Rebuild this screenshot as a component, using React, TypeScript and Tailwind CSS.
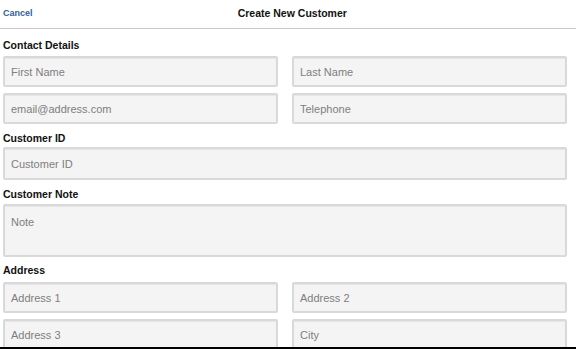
const inputCls =
  'block w-full h-[31px] rounded-[2px] border-2 border-[#d9d9d9] bg-[#f4f4f4] pl-[6px] text-[11px] text-[#333] placeholder:text-[#7e7e7e] shadow-[inset_0_1px_1px_rgba(0,0,0,0.06)] outline-none';

function Field({ placeholder }: { placeholder: string }) {
  return <input className={inputCls} placeholder={placeholder} />;
}

function Section({
  title,
  top,
  gap,
  children,
}: {
  title: string;
  top: string;
  gap: string;
  children: React.ReactNode;
}) {
  return (
    <section className={top}>
      <h2 className={`text-[10.5px] leading-[14px] font-bold text-[#111] ${gap}`}>{title}</h2>
      {children}
    </section>
  );
}

export default function App() {
  return (
    <div
      className="flex h-[349px] w-[576px] flex-col overflow-hidden border-b-2 border-black bg-white"
      style={{ fontFamily: '"Liberation Sans", Arial, sans-serif' }}
    >
      <header className="relative flex h-[29px] shrink-0 items-center border-b border-[#c9c9c9] pl-[3px]">
        <button className="text-[9px] font-bold text-[#2d5ea8]">Cancel</button>
        <h1 className="flex-1 pr-[24px] text-center text-[10.5px] font-bold text-[#111]">
          Create New Customer
        </h1>
      </header>

      <div className="pl-[3px] pr-[9px]">
        <Section title="Contact Details" top="mt-[9px]" gap="mb-[4px]">
          <div className="grid grid-cols-2 gap-x-[14px] gap-y-[6px]">
            <Field placeholder="First Name" />
            <Field placeholder="Last Name" />
            <Field placeholder="email@address.com" />
            <Field placeholder="Telephone" />
          </div>
        </Section>

        <Section title="Customer ID" top="mt-[7px]" gap="mb-[2px]">
          <input className={`${inputCls} h-[33px]`} placeholder="Customer ID" />
        </Section>

        <Section title="Customer Note" top="mt-[7px]" gap="mb-[3px]">
          <textarea
            className={`${inputCls} h-[53px] resize-none pt-[9px] leading-[14px]`}
            placeholder="Note"
          />
        </Section>

        <Section title="Address" top="mt-[6px]" gap="mb-[5px]">
          <div className="grid grid-cols-2 gap-x-[14px] gap-y-[6px]">
            <Field placeholder="Address 1" />
            <Field placeholder="Address 2" />
            <Field placeholder="Address 3" />
            <Field placeholder="City" />
          </div>
        </Section>
      </div>
    </div>
  );
}
